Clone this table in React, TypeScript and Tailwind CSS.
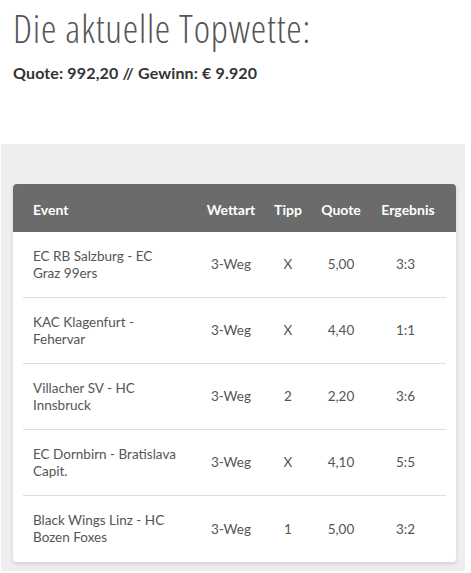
const rows = [
  { event: 'EC RB Salzburg - EC Graz 99ers', art: '3-Weg', tipp: 'X', quote: '5,00', result: '3:3' },
  { event: 'KAC Klagenfurt - Fehervar', art: '3-Weg', tipp: 'X', quote: '4,40', result: '1:1' },
  { event: 'Villacher SV - HC Innsbruck', art: '3-Weg', tipp: '2', quote: '2,20', result: '3:6' },
  { event: 'EC Dornbirn - Bratislava Capit.', art: '3-Weg', tipp: 'X', quote: '4,10', result: '5:5' },
  { event: 'Black Wings Linz - HC Bozen Foxes', art: '3-Weg', tipp: '1', quote: '5,00', result: '3:2' },
];

export default function App() {
  return (
    <div className="w-[471px] h-[573px] bg-white overflow-hidden">
      {/* Heading */}
      <div className="pl-[13px] pt-[5px]">
        <h1 className="text-[39px] leading-[45px] font-light font-stretch-[75%] tracking-[0.8px] text-[#555555] font-['Open_Sans',sans-serif]">
          Die aktuelle Topwette:
        </h1>
        <p className="mt-[13px] text-[16px] leading-[20px] tracking-[0.15px] font-bold text-[#333333] font-['Lato',sans-serif]">
          Quote: 992,20 // Gewinn: € 9.920
        </p>
      </div>

      {/* Panel */}
      <div className="mt-[61px] ml-[1px] w-[464px] bg-[#eeeeee] pt-[40px] pl-[12px] pr-[9px] pb-[9px]">
        <div className="bg-white rounded-[4px] shadow-[0_2px_4px_rgba(0,0,0,0.12)] font-['Lato',sans-serif]">
          <div className="grid grid-cols-[190px_56px_58px_48px_86px] items-center h-[48px] pt-[2px] bg-[#6b6b6b] rounded-t-[4px] text-white text-[14px] font-bold">
            <div className="pl-[20px]">Event</div>
            <div className="text-center">Wettart</div>
            <div className="text-center">Tipp</div>
            <div className="text-center">Quote</div>
            <div className="text-center">Ergebnis</div>
          </div>
          <div className="px-[10px]">
            {rows.map((r, i) => (
              <div
                key={i}
                className={`grid grid-cols-[180px_56px_58px_48px_81px] items-center h-[66px] text-[13.5px] leading-[17px] text-[#555555] ${
                  i < rows.length - 1 ? 'border-b border-[#dddddd]' : ''
                }`}
              >
                <div className="pl-[10px] pr-[25px]">{r.event}</div>
                <div className="text-center">{r.art}</div>
                <div className="text-center">{r.tipp}</div>
                <div className="text-center">{r.quote}</div>
                <div className="text-center">{r.result}</div>
              </div>
            ))}
          </div>
        </div>
      </div>
    </div>
  );
}
